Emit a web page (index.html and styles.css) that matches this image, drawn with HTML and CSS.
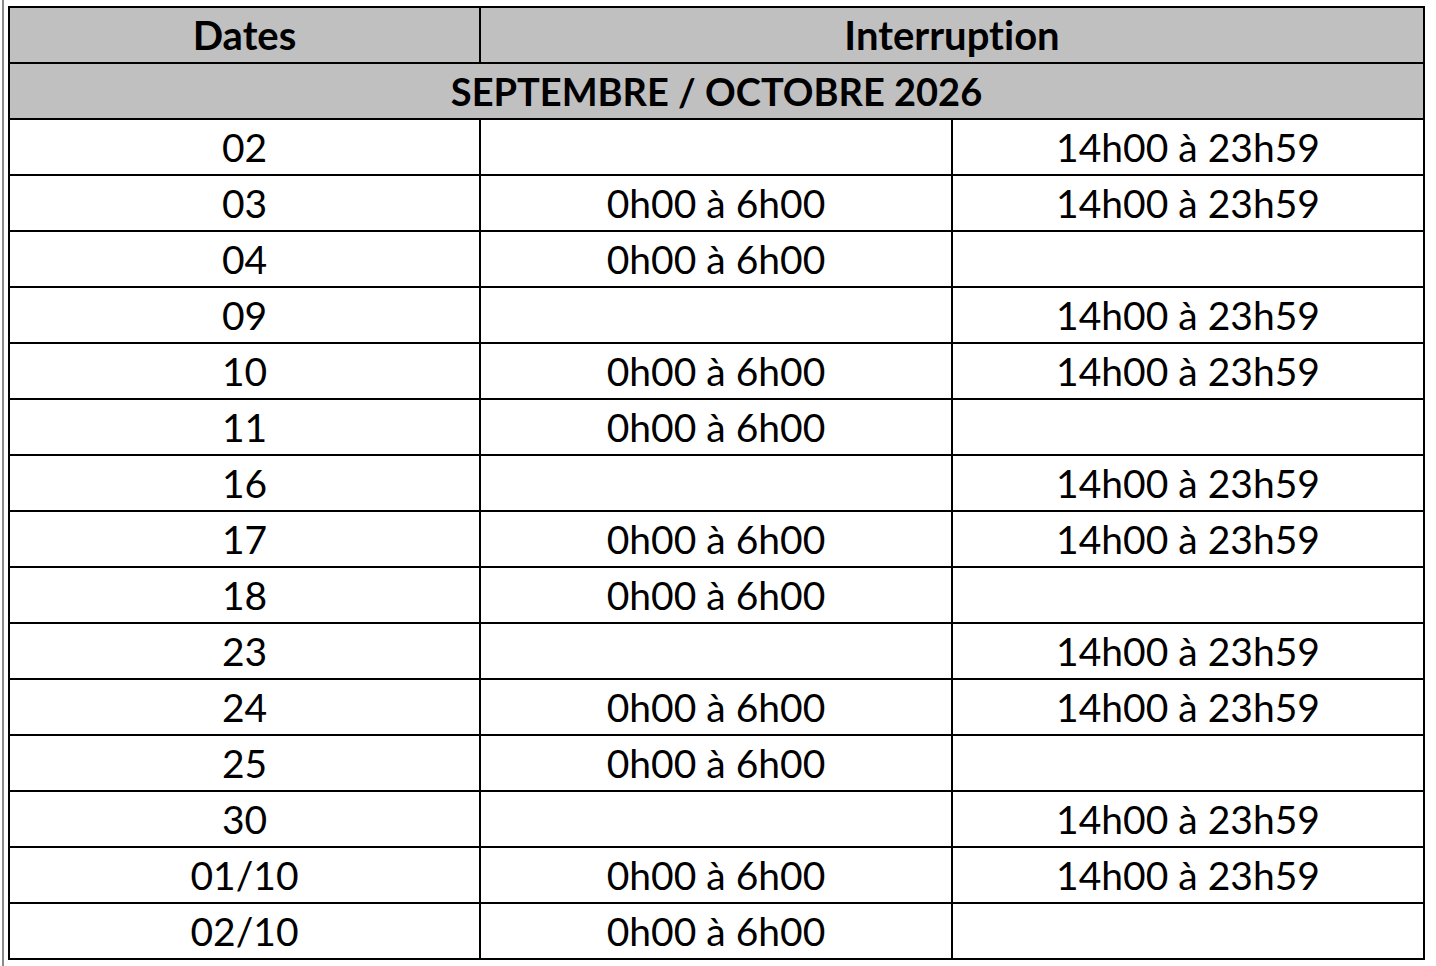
FILE: index.html
```html
<!DOCTYPE html>
<html lang="fr">
<head>
<meta charset="utf-8">
<title>Interruptions</title>
<link rel="stylesheet" href="styles.css">
</head>
<body>
<div class="page">
<table class="sched">
<colgroup><col class="c1"><col class="c2"><col class="c3"></colgroup>
<thead>
<tr class="head head-top"><th>Dates</th><th colspan="2">Interruption</th></tr>
<tr class="head head-month"><th colspan="3">SEPTEMBRE / OCTOBRE 2026</th></tr>
</thead>
<tbody>
<tr><td>02</td><td></td><td>14h00 à 23h59</td></tr>
<tr><td>03</td><td>0h00 à 6h00</td><td>14h00 à 23h59</td></tr>
<tr><td>04</td><td>0h00 à 6h00</td><td></td></tr>
<tr><td>09</td><td></td><td>14h00 à 23h59</td></tr>
<tr><td>10</td><td>0h00 à 6h00</td><td>14h00 à 23h59</td></tr>
<tr><td>11</td><td>0h00 à 6h00</td><td></td></tr>
<tr><td>16</td><td></td><td>14h00 à 23h59</td></tr>
<tr><td>17</td><td>0h00 à 6h00</td><td>14h00 à 23h59</td></tr>
<tr><td>18</td><td>0h00 à 6h00</td><td></td></tr>
<tr><td>23</td><td></td><td>14h00 à 23h59</td></tr>
<tr><td>24</td><td>0h00 à 6h00</td><td>14h00 à 23h59</td></tr>
<tr><td>25</td><td>0h00 à 6h00</td><td></td></tr>
<tr><td>30</td><td></td><td>14h00 à 23h59</td></tr>
<tr><td>01/10</td><td>0h00 à 6h00</td><td>14h00 à 23h59</td></tr>
<tr><td>02/10</td><td>0h00 à 6h00</td><td></td></tr>
</tbody>
</table>
</div>
</body>
</html>
```

FILE: styles.css
```css
html, body {
  margin: 0;
  padding: 0;
  background: #ffffff;
}
.page {
  margin-left: 2px;
  border-left: 2px solid #8a8a8a;
  min-height: 966px;
  padding: 6px 0 0 4px;
  box-sizing: border-box;
}
.sched {
  border-collapse: separate;
  border-spacing: 0;
  table-layout: fixed;
  width: 1417px;
  border-top: 2px solid #000;
  border-left: 2px solid #000;
  font-family: Lato, "Open Sans", sans-serif;
  font-variant-ligatures: none;
  color: #000;
}
.c1 { width: 471px; }
.c2 { width: 472px; }
.c3 { width: 472px; }
.sched th,
.sched td {
  height: 54px;
  padding: 0;
  border-right: 2px solid #000;
  border-bottom: 2px solid #000;
  text-align: center;
  vertical-align: middle;
  line-height: 54px;
  white-space: nowrap;
  overflow: hidden;
}
.sched td {
  font-size: 39px;
  font-weight: 400;
}
.head th {
  background: #c0c0c0;
  font-weight: 700;
}
.head-top th { font-size: 40px; }
.head-month th { font-size: 38px; }
```
